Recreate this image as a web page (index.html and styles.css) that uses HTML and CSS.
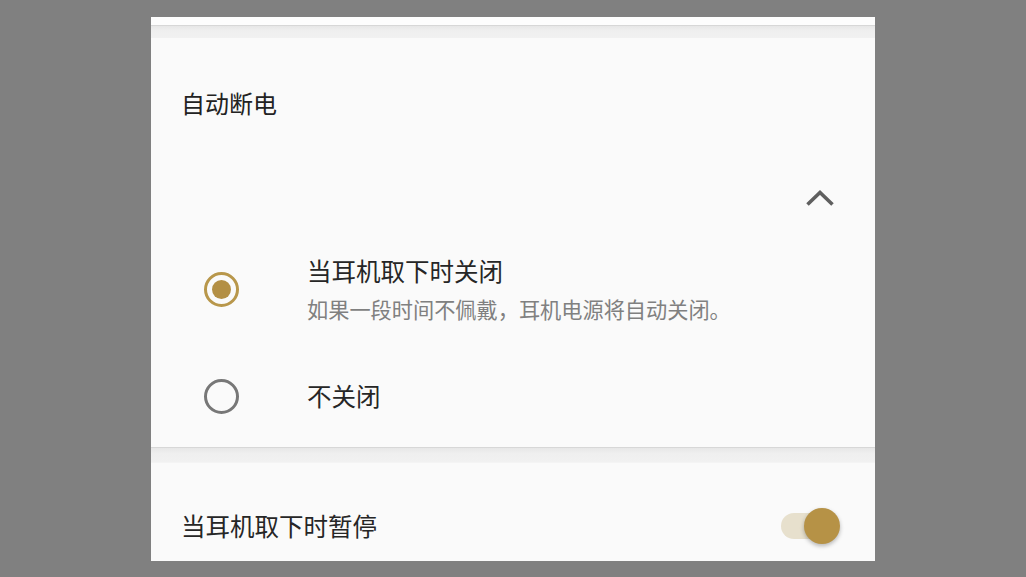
FILE: index.html
```html
<!DOCTYPE html>
<html lang="zh">
<head>
<meta charset="utf-8">
<title>自动断电</title>
<link rel="stylesheet" href="styles.css">
</head>
<body>
<div class="panel">
  <div class="top-strip"></div>
  <div class="band"></div>
  <section class="section">
    <div class="header">自动断电</div>
    <div class="chevron-row">
      <svg class="chevron" width="30" height="18" viewBox="0 0 30 18"><path d="M2.5 15.5 L15 3.5 L27.5 15.5" fill="none" stroke="#5f5f5f" stroke-width="3.6"/></svg>
    </div>
    <div class="option">
      <span class="radio checked"><span class="dot"></span></span>
      <div class="option-text">
        <div class="title">当耳机取下时关闭</div>
        <div class="subtitle">如果一段时间不佩戴，耳机电源将自动关闭。</div>
      </div>
    </div>
    <div class="option second">
      <span class="radio"></span>
      <div class="option-text">
        <div class="title">不关闭</div>
      </div>
    </div>
  </section>
  <div class="band mid"></div>
  <section class="section toggle-section">
    <div class="toggle-row">
      <div class="title">当耳机取下时暂停</div>
      <span class="switch"><span class="track"></span><span class="thumb"></span></span>
    </div>
  </section>
</div>
</body>
</html>
```
FILE: styles.css
```css
html, body {
  margin: 0;
  padding: 0;
  background: #808080;
  height: 577px;
  overflow: hidden;
}
body {
  font-family: "Noto Sans CJK SC", "Noto Sans", sans-serif;
}
.panel {
  width: 724px;
  margin-left: 151px;
  margin-top: 17px;
  background: #fafafa;
  height: 544px;
  overflow: hidden;
}
.top-strip {
  height: 8px;
  background: #fdfdfd;
}
.band {
  height: 12px;
  border-top: 1px solid #d7d7d7;
  background: linear-gradient(#e7e7e7, #efefef 40%, #f1f1f1);
}
.band.mid {
  height: 14px;
  border-bottom: 1px solid #f4f4f4;
}
.section {
  padding-left: 30px;
  padding-right: 41px;
}
.header {
  padding-top: 45px;
  font-size: 24px;
  line-height: 40px;
  color: #222;
}
.chevron-row {
  margin-top: 51px;
  height: 48px;
  display: flex;
  justify-content: flex-end;
  align-items: center;
}
.chevron {
  display: block;
  margin-right: -1px;
}
.option {
  display: flex;
  align-items: center;
  margin-top: 31px;
}
.option.second {
  margin-top: 53px;
  padding-bottom: 33px;
}
.radio {
  box-sizing: border-box;
  width: 35px;
  height: 35px;
  border-radius: 50%;
  border: 3.5px solid #777;
  margin-left: 23px;
  margin-right: 68px;
  display: flex;
  align-items: center;
  justify-content: center;
  flex: none;
}
.radio.checked {
  border-color: #b8974b;
}
.dot {
  width: 19px;
  height: 19px;
  border-radius: 50%;
  background: #b38f44;
}
.title {
  font-size: 24.5px;
  line-height: 36px;
  color: #262626;
}
.subtitle {
  margin-top: 4px;
  font-size: 21.2px;
  line-height: 32px;
  color: #808080;
}
.toggle-row {
  padding-top: 45px;
  display: flex;
  align-items: center;
  justify-content: space-between;
}
.switch {
  position: relative;
  width: 60px;
  height: 36px;
  margin-right: -7px;
  flex: none;
}
.track {
  position: absolute;
  left: 0;
  top: 5px;
  width: 50px;
  height: 26px;
  border-radius: 13px;
  background: #e7e0cd;
}
.thumb {
  position: absolute;
  left: 23px;
  top: 0;
  width: 36px;
  height: 36px;
  border-radius: 50%;
  background: #b69246;
  box-shadow: 0 2px 4px rgba(0,0,0,0.28);
}
```
